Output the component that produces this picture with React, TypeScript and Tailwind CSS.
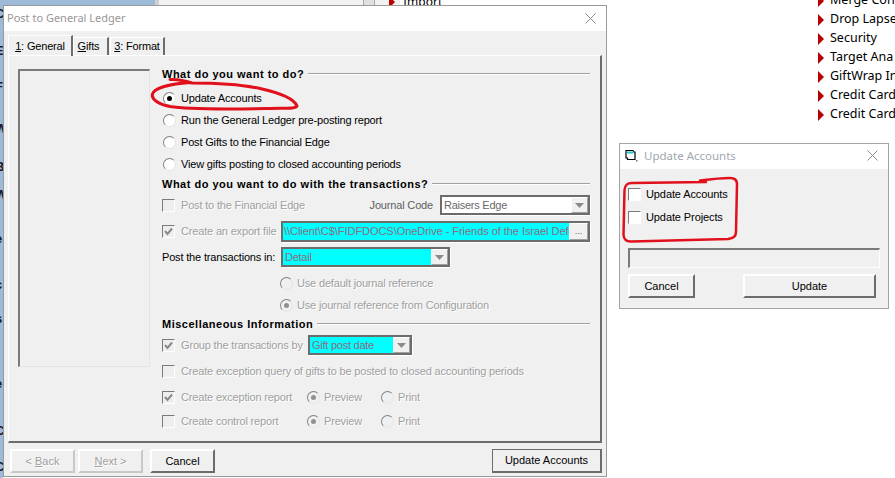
import React from "react";

const TXT = "text-black";
const DIS = "text-[#a0a0a0] [text-shadow:1px_1px_0_#ffffff]";

function Radio({ on, disabled }: { on?: boolean; disabled?: boolean }) {
  return (
    <span className={`flex h-[13px] w-[13px] shrink-0 items-center justify-center rounded-full border border-t-[#808080] border-l-[#808080] border-r-[#e4e4e4] border-b-[#e4e4e4] ${disabled ? "bg-[#f0f0f0]" : "bg-white"}`}>
      {on && <span className={`h-[5px] w-[5px] rounded-full ${disabled ? "bg-[#909090]" : "bg-black"}`} />}
    </span>
  );
}

function Check({ on, white }: { on?: boolean; white?: boolean }) {
  return (
    <span className={`flex h-[13px] w-[13px] shrink-0 items-center justify-center border border-t-[#7a7a7a] border-l-[#7a7a7a] border-r-white border-b-white ${white ? "bg-white" : "bg-[#eeeeee]"}`}>
      {on && (
        <svg width="9" height="9" viewBox="0 0 9 9">
          <path d="M1 4 L3.5 7 L8 1.5" fill="none" stroke="#8a8a8a" strokeWidth="2" />
        </svg>
      )}
    </span>
  );
}

function Heading({ text, mt }: { text: string; mt: string }) {
  return (
    <div className={`flex h-5 items-center ${mt}`}>
      <span className="whitespace-nowrap font-['Liberation_Sans',sans-serif] text-[11px] font-bold tracking-[0.5px] text-black">{text}</span>
      <span className="ml-[4px] h-[2px] flex-1 border-t border-b border-t-[#a0a0a0] border-b-white" />
    </div>
  );
}

function Arrow() {
  return (
    <span className="flex h-full w-[17px] shrink-0 items-center justify-center border border-t-white border-l-white border-r-[#a0a0a0] border-b-[#a0a0a0] bg-[#f0f0f0]">
      <svg width="9" height="5" viewBox="0 0 9 5"><path d="M0 0H9L4.5 5Z" fill="#8a8a8a" /></svg>
    </span>
  );
}

function Combo({ w, bg, color, text }: { w: string; bg: string; color: string; text: string }) {
  return (
    <div className={`flex h-[20px] shrink-0 border-2 border-[#6c6c6c] shadow-[1px_1px_0_#ffffff] ${w} ${bg}`}>
      <span className={`min-w-0 flex-1 overflow-hidden whitespace-nowrap pl-[2px] text-[11px] leading-[17px] tracking-[-0.25px] ${color}`}>{text}</span>
      <Arrow />
    </div>
  );
}

function Btn({ w, children, disabled, def }: { w: string; children: React.ReactNode; disabled?: boolean; def?: boolean }) {
  return (
    <div className={`flex h-[24px] shrink-0 items-center justify-center whitespace-nowrap tracking-normal ${w} ${def ? "border border-[#6c6c6c] border-r-2 border-b-2" : "border-2 border-t-[#ffffff] border-l-[#ffffff] border-r-[#6c6c6c] border-b-[#6c6c6c]"} ${disabled ? "border-r-[#c8c8c8] border-b-[#c8c8c8] " + DIS : TXT} text-[11px]`}>
      {children}
    </div>
  );
}

function CloseX() {
  return (
    <svg className="shrink-0" width="11" height="11" viewBox="0 0 11 11">
      <path d="M0.5 0.5L10.5 10.5M10.5 0.5L0.5 10.5" stroke="#8c8c8c" strokeWidth="1" fill="none" />
    </svg>
  );
}

function Tri() {
  return <svg width="6" height="12" viewBox="0 0 6 12" className="shrink-0"><path d="M0 0L6 6L0 12Z" fill="#b80000" /></svg>;
}

function Tab({ children, active, w }: { children: React.ReactNode; active?: boolean; w: string }) {
  return (
    <div className={`flex shrink-0 items-center justify-center whitespace-nowrap border-l border-t border-l-white border-t-white border-r-2 border-r-[#6c6c6c] text-[11px] text-black ${w} ${active ? "z-10 mb-[-1px] h-[21px]" : "mt-[2px] h-[18px]"}`}>
      {children}
    </div>
  );
}

const strip = [
  ["top-[7px]", "C"], ["top-[44px]", "E"], ["top-[80px]", "F"], ["top-[122px]", "W"], ["top-[160px]", "B"],
  ["top-[188px]", "W"], ["top-[232px]", "e"], ["top-[278px]", "c"], ["top-[312px]", "s"], ["top-[352px]", "t"],
  ["top-[377px]", "e"], ["top-[396px]", "r"], ["top-[424px]", "C"], ["top-[460px]", "C"],
];

const list = ["Merge Cons", "Drop Lapse", "Security", "Target Ana", "GiftWrap In", "Credit Card", "Credit Card"];

export default function App() {
  return (
    <div className="relative h-[478px] w-[895px] overflow-hidden bg-white font-['Liberation_Sans',sans-serif] text-[11px] tracking-[-0.17px]">
      {/* desktop behind the dialogs */}
      <div className="absolute left-0 top-0 h-[478px] w-[3px] overflow-hidden bg-[#9dbad8]">
        {strip.map(([t, c], i) => (
          <span key={i} className={`absolute left-[-5px] text-[13px] font-bold leading-[14px] text-[#1a1a2a] ${t}`}>{c}</span>
        ))}
      </div>
      <div className="absolute left-0 top-0 flex h-[6px] w-[400px] bg-[#f2f2f2]">
        <div className="h-full w-[155px] bg-[#9dbad8]" />
        <div className="h-full w-[4px] bg-[#d0d0d0]" />
        <div className="h-full w-[204px]" />
        <div className="h-full w-[12px] border-x border-[#a8a8a8] bg-[#e0e0e0]" />
      </div>
      <div className="absolute left-[389px] top-[-5px] flex h-[14px] items-center tracking-normal">
        <Tri />
        <span className="ml-[8px] font-['Noto_Sans',sans-serif] text-[12px] text-black">Import</span>
      </div>
      <div className="absolute left-[818px] top-[-9px] flex flex-col tracking-normal">
        {list.map((t, i) => (
          <div key={i} className="flex h-[19px] items-center whitespace-nowrap">
            <Tri />
            <span className="ml-[6px] font-['Noto_Sans',sans-serif] text-[12.5px] text-black">{t}</span>
          </div>
        ))}
      </div>

      {/* Post to General Ledger */}
      <div className="absolute left-[3px] top-[5px] flex h-[472px] w-[604px] flex-col border border-[#9a9a9a] bg-[#f0f0f0]">
        <div className="flex h-[25px] shrink-0 items-center justify-between bg-white pl-[3px] pr-[10px] tracking-normal">
          <span className="font-['Noto_Sans',sans-serif] text-[11px] text-[#9a9696]">Post to General Ledger</span>
          <CloseX />
        </div>
        <div className="flex h-[24px] shrink-0 items-end pl-[4px]">
          <Tab active w="w-[65px]"><span><u>1</u>: General</span></Tab>
          <Tab w="w-[36px] pr-[4px]"><span><u>G</u>ifts</span></Tab>
          <span className="w-[1px]" />
          <Tab w="w-[55px]"><span><u>3</u>: Format</span></Tab>
        </div>
        <div className="ml-[4px] flex h-[388px] w-[594px] shrink-0 border-l border-t border-l-white border-t-white border-r-2 border-b-2 border-r-[#6c6c6c] border-b-[#6c6c6c]">
          <div className="ml-[9px] mt-[13px] h-[298px] w-[132px] shrink-0 border-2 border-t-[#7a7a7a] border-l-[#7a7a7a] border-r-[#e4e4e4] border-b-[#e4e4e4] border-r-[1px] border-b-[1px]" />
          <div className="ml-[12px] mt-[8px] flex w-[428px] flex-col whitespace-nowrap">
            <Heading text="What do you want to do?" mt="" />
            <div className={`mt-[4px] flex h-5 items-center pl-[1px] ${TXT}`}><Radio on /><span className="ml-[5px]">Update Accounts</span></div>
            <div className={`mt-[2px] flex h-5 items-center pl-[1px] ${TXT}`}><Radio /><span className="ml-[5px]">Run the General Ledger pre-posting report</span></div>
            <div className={`mt-[2px] flex h-5 items-center pl-[1px] ${TXT}`}><Radio /><span className="ml-[5px]">Post Gifts to the Financial Edge</span></div>
            <div className={`mt-[2px] flex h-5 items-center pl-[1px] ${TXT}`}><Radio /><span className="ml-[5px]">View gifts posting to closed accounting periods</span></div>
            <Heading text="What do you want to do with the transactions?" mt="" />
            <div className="mt-[1px] flex h-5 items-center">
              <Check /><span className={`ml-[6px] flex-1 ${DIS}`}>Post to the Financial Edge</span>
              <span className="mr-[7px] text-[#606060]">Journal Code</span>
              <Combo w="w-[150px]" bg="bg-white" color="text-[#6a6a6a]" text="Raisers Edge" />
            </div>
            <div className="mt-[6px] flex h-5 items-center">
              <div className={`flex w-[119px] shrink-0 items-center ${DIS}`}><Check on /><span className="ml-[6px]">Create an export file</span></div>
              <div className="flex h-[21px] w-[309px] shrink-0 border-2 border-[#6c6c6c] bg-[#00ffff] shadow-[1px_1px_0_#ffffff]">
                <span className="min-w-0 flex-1 overflow-hidden whitespace-nowrap pl-[1px] text-[11px] leading-[17px] tracking-[-0.05px] text-[#8c6c80]">\\Client\C$\FIDFDOCS\OneDrive - Friends of the Israel Defense</span>
                <span className="flex h-full w-[19px] shrink-0 items-end justify-center border border-t-white border-l-white border-r-[#a0a0a0] border-b-[#a0a0a0] bg-[#f0f0f0] pb-[3px] text-[9px] leading-[9px] tracking-normal text-[#606060]">...</span>
              </div>
            </div>
            <div className="mt-[6px] flex h-5 items-center">
              <span className={`w-[119px] shrink-0 ${TXT}`}>Post the transactions in:</span>
              <Combo w="w-[169px]" bg="bg-[#00ffff]" color="text-[#8c6c80]" text="Detail" />
            </div>
            <div className={`mt-[6px] flex h-5 items-center pl-[118px] ${DIS}`}><Radio disabled /><span className="ml-[4px]">Use default journal reference</span></div>
            <div className={`mt-[2px] flex h-5 items-center pl-[118px] ${DIS}`}><Radio on disabled /><span className="ml-[4px]">Use journal reference from Configuration</span></div>
            <Heading text="Miscellaneous Information" mt="mt-[-1px]" />
            <div className="mt-[1px] flex h-5 items-center">
              <div className={`flex w-[146px] shrink-0 items-center ${DIS}`}><Check on /><span className="ml-[6px]">Group the transactions by</span></div>
              <Combo w="w-[104px]" bg="bg-[#00ffff]" color="text-[#8c6c80]" text="Gift post date" />
            </div>
            <div className={`mt-[6px] flex h-5 items-center ${DIS}`}><Check /><span className="ml-[6px]">Create exception query of gifts to be posted to closed accounting periods</span></div>
            <div className={`mt-[6px] flex h-5 items-center ${DIS}`}>
              <div className="flex w-[145px] shrink-0 items-center"><Check on /><span className="ml-[6px]">Create exception report</span></div>
              <div className="flex w-[74px] shrink-0 items-center"><Radio on disabled /><span className="ml-[4px]">Preview</span></div>
              <Radio disabled /><span className="ml-[4px]">Print</span>
            </div>
            <div className={`mt-[4px] flex h-5 items-center ${DIS}`}>
              <div className="flex w-[145px] shrink-0 items-center"><Check /><span className="ml-[6px]">Create control report</span></div>
              <div className="flex w-[74px] shrink-0 items-center"><Radio on disabled /><span className="ml-[4px]">Preview</span></div>
              <Radio disabled /><span className="ml-[4px]">Print</span>
            </div>
          </div>
        </div>
        <div className="mt-[6px] flex pl-[6px] pr-[4px]">
          <Btn w="w-[65px]" disabled><span>&lt; <u>B</u>ack</span></Btn>
          <Btn w="w-[65px] ml-[3px]" disabled><span><u>N</u>ext &gt;</span></Btn>
          <Btn w="w-[65px] ml-[7px]">Cancel</Btn>
          <span className="flex-1" />
          <Btn w="w-[110px]" def>Update Accounts</Btn>
        </div>
      </div>

      {/* Update Accounts */}
      <div className="absolute left-[619px] top-[143px] flex h-[166px] w-[270px] flex-col border border-[#a4a4a4] bg-[#f0f0f0] tracking-[-0.1px]">
        <div className="flex h-[25px] shrink-0 items-center bg-white pb-[2px] pl-[5px] pr-[10px] tracking-normal">
          <svg width="14" height="13" viewBox="0 0 14 13" className="shrink-0">
            <path d="M1 1.5H8L9 3H10V10.5H2.5V9H1Z" fill="#fff" stroke="#000" strokeWidth="1.2" />
            <path d="M2 2.5H8.5V4.5H2Z" fill="#19c8d0" />
            <path d="M11 11H12.5V12.5H11Z" fill="#707070" />
          </svg>
          <span className="ml-[5px] flex-1 font-['Noto_Sans',sans-serif] text-[11.5px] text-[#a0a8b0]">Update Accounts</span>
          <CloseX />
        </div>
        <div className="flex flex-col pl-[8px]">
          <div className={`mt-[15px] flex h-5 items-center ${TXT}`}><Check white /><span className="ml-[5px]">Update Accounts</span></div>
          <div className={`mt-[3px] flex h-5 items-center ${TXT}`}><Check white /><span className="ml-[5px]">Update Projects</span></div>
          <div className="mt-[21px] h-[20px] w-[252px] border-2 border-t-[#7a7a7a] border-l-[#7a7a7a] border-r-white border-b-white border-r-[1px] border-b-[1px]" />
          <div className="mt-[6px] flex">
            <Btn w="w-[67px]">Cancel</Btn>
            <Btn w="w-[133px] ml-[48px]">Update</Btn>
          </div>
        </div>
      </div>

      {/* red annotations */}
      <svg className="pointer-events-none absolute left-0 top-0" width="895" height="478" viewBox="0 0 895 478">
        <path d="M170 79.5C178 79 186 81 192 83C215 83 245 85 262 89C280 93 294 99 297 106C296 109 285 108 270 108.5C240 109 190 110 170 106.5C158 104 151 99 152.5 94C154 88 170 84 190 82.5" fill="none" stroke="#e0101c" strokeWidth="3" strokeLinecap="round" />
        <path d="M700 180.5C712 179 722 178 730 178C735 178 737 180 737 184L736 232C736 237 733 238 728 239L632 241.5C627 242 624 240 623.5 235L624.5 190C625 185 627 183 632 183L706 182" fill="none" stroke="#e0101c" strokeWidth="2.5" strokeLinecap="round" />
      </svg>
    </div>
  );
}
